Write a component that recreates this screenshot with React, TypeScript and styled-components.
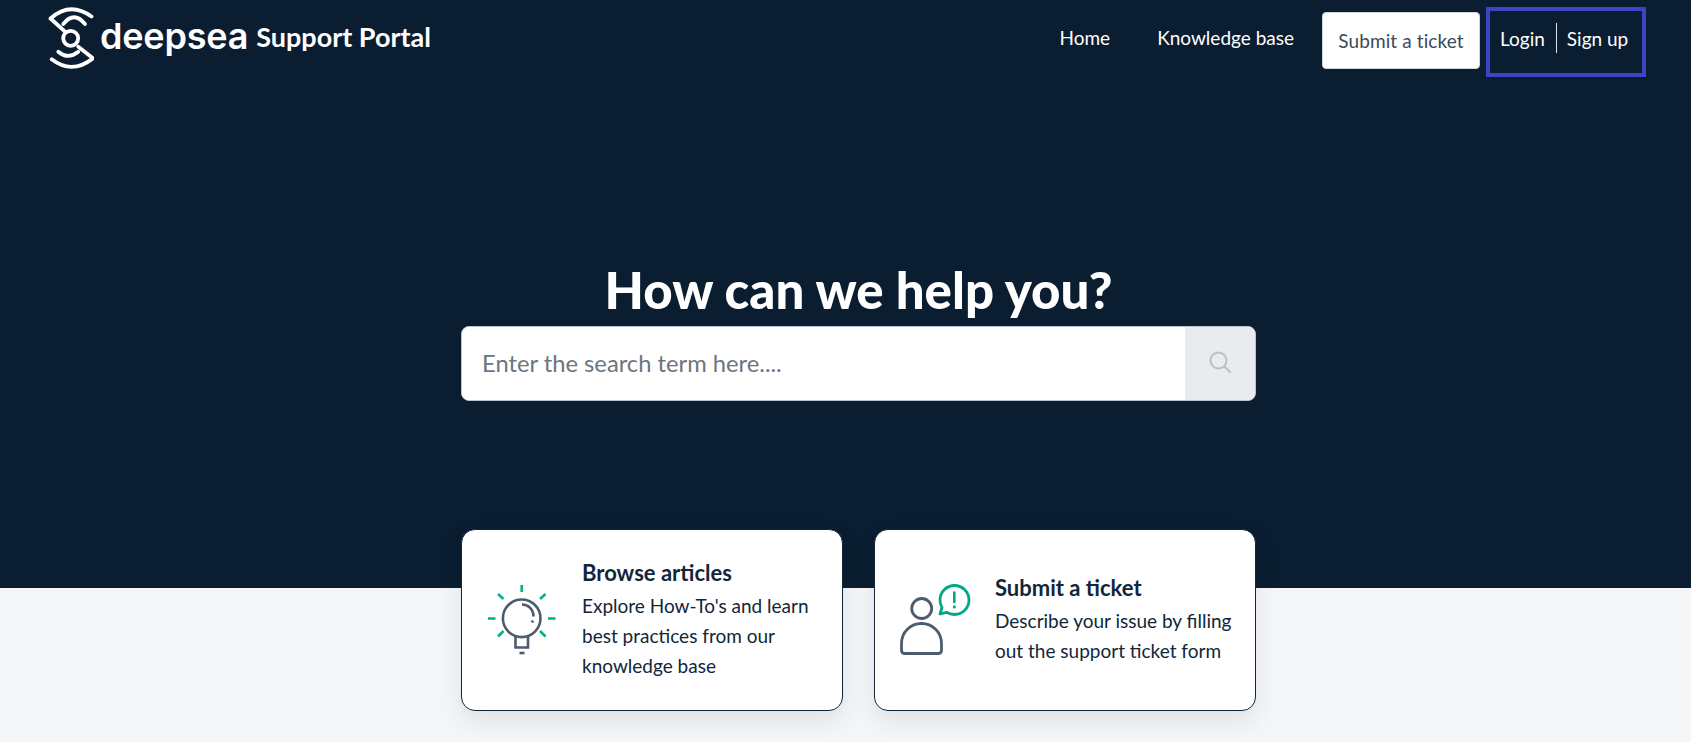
import styled, { createGlobalStyle } from "styled-components";

const GlobalStyle = createGlobalStyle`
  html, body {
    margin: 0;
    padding: 0;
    background: #f5f6f8;
    font-family: "Lato", "Noto Sans", sans-serif;
    color: #12263a;
    overflow: hidden;
  }
  * {
    box-sizing: border-box;
  }
`;

const Page = styled.div`
  width: 1691px;
  height: 742px;
  overflow: hidden;
`;

const Hero = styled.section`
  height: 588px;
  background: #0b1d30;
`;

const Header = styled.header`
  display: flex;
  justify-content: space-between;
  align-items: flex-start;
  padding: 7px 45px 0 48px;
`;

const Brand = styled.a`
  display: flex;
  align-items: center;
  height: 62px;
  color: #fff;
`;

const BrandMark = styled.span`
  margin: 0 0 4px 6px;
  font-family: "Inter", sans-serif;
  font-size: 36px;
  font-weight: 600;
  letter-spacing: -0.2px;
  line-height: 1;
`;

const BrandTitle = styled.span`
  margin: 0 0 4px 8px;
  font-size: 27px;
  font-weight: 700;
`;

const Nav = styled.nav`
  display: flex;
  align-items: flex-start;
`;

const NavLink = styled.a`
  margin-top: 17px;
  margin-right: 47px;
  color: #fff;
  font-size: 19px;
  line-height: 28px;
`;

const TicketButton = styled.a`
  display: flex;
  align-items: center;
  justify-content: center;
  width: 158px;
  height: 57px;
  margin-top: 5px;
  margin-left: -19px;
  background: #fff;
  border: 1px solid #ced4da;
  border-radius: 4px;
  color: #3b4a5a;
  font-size: 19px;
  letter-spacing: 0.1px;
`;

const AuthBox = styled.div`
  display: flex;
  align-items: center;
  width: 160px;
  height: 70px;
  margin-left: 6px;
  padding: 0 0 8px 10px;
  border: 4px solid #3c46c4;
  color: #fff;
  font-size: 19px;
`;

const AuthDivider = styled.span`
  width: 1px;
  height: 30px;
  margin: 0 10px 0 11px;
  background: #dfe3e8;
`;

const HeroBody = styled.div`
  display: flex;
  flex-direction: column;
  align-items: center;
  margin-top: 181px;
  padding-left: 26px;
`;

const Title = styled.h1`
  margin: 0 0 4px;
  color: #fff;
  font-size: 51px;
  font-weight: 900;
  line-height: 64px;
`;

const SearchBar = styled.form`
  display: flex;
  width: 795px;
  height: 75px;
  background: #fff;
  border: 1px solid #b8c4cf;
  border-radius: 8px;
  overflow: hidden;
`;

const SearchInput = styled.input`
  flex: 1;
  min-width: 0;
  padding: 0 20px 2px;
  border: none;
  outline: none;
  font-family: inherit;
  font-size: 23.75px;
  &::placeholder {
    color: #6c757d;
    opacity: 1;
  }
`;

const SearchButton = styled.button`
  display: flex;
  align-items: center;
  justify-content: center;
  width: 70px;
  background: #e9ecef;
  border: none;
  padding: 0 0 4px;
`;

const Cards = styled.div`
  display: flex;
  justify-content: center;
  gap: 31px;
  margin-top: -59px;
  padding-left: 26px;
`;

const Card = styled.a`
  display: flex;
  align-items: center;
  gap: 20px;
  width: 382px;
  height: 182px;
  padding-left: 20px;
  background: #fff;
  border: 1px solid #12263a;
  border-radius: 14px;
  box-shadow: 0 10px 24px rgba(24, 50, 71, 0.1);
`;

const CardIcon = styled.svg`
  flex: none;
  width: 80px;
  height: 80px;
`;

const CardBody = styled.div`
  padding-bottom: 2px;
`;

const CardTitle = styled.h3`
  margin: 0 0 3px;
  color: #12263a;
  font-size: 22px;
  font-weight: 700;
  line-height: 30px;
`;

const CardText = styled.p`
  margin: 0;
  color: #12263a;
  font-size: 19px;
  line-height: 30px;
`;

const LogoIcon = () => (
  <svg width="46" height="62" viewBox="0 0 46 62" fill="none" stroke="#fff" strokeWidth="3.8" strokeLinecap="round" strokeLinejoin="round">
    <path d="M17 24.7 L2.5 11.5 Q22 -6 43.5 9.5" />
    <path d="M15.3 17 Q26 3.5 37 17" />
    <circle cx="22.7" cy="31.3" r="7.5" />
    <path d="M30.3 39.7 L45 51.3 Q24 68 3.7 52.3" />
    <path d="M10.3 44.7 Q20 53 30.3 44.7" />
  </svg>
);

const SearchIcon = () => (
  <svg width="24" height="24" viewBox="0 0 24 24" fill="none" stroke="#b4c0c9" strokeWidth="2">
    <circle cx="10.5" cy="10.5" r="8" />
    <path d="M16.5 16.5 L22 22" strokeLinecap="round" />
  </svg>
);

const BulbIcon = () => (
  <CardIcon viewBox="0 0 80 80" fill="none" strokeLinecap="butt">
    <g stroke="#00b48a" strokeWidth="2.6">
      <path d="M39.7 5 V12" />
      <path d="M16 14 L21.5 19" />
      <path d="M63.5 14 L58 19" />
      <path d="M6 38.5 H13.5" />
      <path d="M66 38.5 H73.5" />
      <path d="M21.5 51 L16 56.5" />
      <path d="M58 51 L63.5 56.5" />
    </g>
    <g stroke="#4d5c6c" strokeWidth="2.6">
      <circle cx="39.7" cy="38.3" r="18.8" />
      <path d="M40 24.5 C46.5 24.5 51.5 29.5 51.5 36.5" />
      <path d="M50.8 40.5 L50 42.5" />
      <path d="M33.5 57 V67.5 H46 V57" />
      <path d="M37.5 73 H42.5" />
    </g>
  </CardIcon>
);

const TicketIcon = () => (
  <CardIcon viewBox="0 0 80 80" fill="none" strokeLinecap="round" strokeLinejoin="round">
    <g stroke="#4d5c6c" strokeWidth="2.8">
      <circle cx="26.7" cy="28.5" r="10" />
      <path d="M6.5 70 C6.5 72.5 7.5 73.5 9.5 73.5 H43.5 C45.5 73.5 46.5 72.5 46.5 70 V63.5 C46.5 52 37.5 43.5 26.5 43.5 C15.5 43.5 6.5 52 6.5 63.5 Z" />
    </g>
    <path
      d="M59.5 5.5 C51.5 5.5 45 12 45 20 C45 23 45.8 25.5 47 27.5 L45 34 L51.5 32.3 C53.8 33.7 56.5 34.5 59.5 34.5 C67.5 34.5 74 28 74 20 C74 12 67.5 5.5 59.5 5.5 Z"
      stroke="#00a886"
      strokeWidth="2.8"
    />
    <path d="M59.3 12.5 V22" stroke="#00a886" strokeWidth="2.6" />
    <path d="M59.3 26.8 V27" stroke="#00a886" strokeWidth="3" />
  </CardIcon>
);

export default function App() {
  return (
    <Page>
      <GlobalStyle />
      <Hero>
        <Header>
          <Brand>
            <LogoIcon />
            <BrandMark>deepsea</BrandMark>
            <BrandTitle>Support Portal</BrandTitle>
          </Brand>
          <Nav>
            <NavLink>Home</NavLink>
            <NavLink>Knowledge base</NavLink>
            <TicketButton>Submit a ticket</TicketButton>
            <AuthBox>
              <span>Login</span>
              <AuthDivider />
              <span>Sign up</span>
            </AuthBox>
          </Nav>
        </Header>
        <HeroBody>
          <Title>How can we help you?</Title>
          <SearchBar>
            <SearchInput placeholder="Enter the search term here...." />
            <SearchButton type="button">
              <SearchIcon />
            </SearchButton>
          </SearchBar>
        </HeroBody>
      </Hero>
      <Cards>
        <Card>
          <BulbIcon />
          <CardBody>
            <CardTitle>Browse articles</CardTitle>
            <CardText>
              Explore How-To's and learn
              <br />
              best practices from our
              <br />
              knowledge base
            </CardText>
          </CardBody>
        </Card>
        <Card>
          <TicketIcon />
          <CardBody>
            <CardTitle>Submit a ticket</CardTitle>
            <CardText>
              Describe your issue by filling
              <br />
              out the support ticket form
            </CardText>
          </CardBody>
        </Card>
      </Cards>
    </Page>
  );
}
